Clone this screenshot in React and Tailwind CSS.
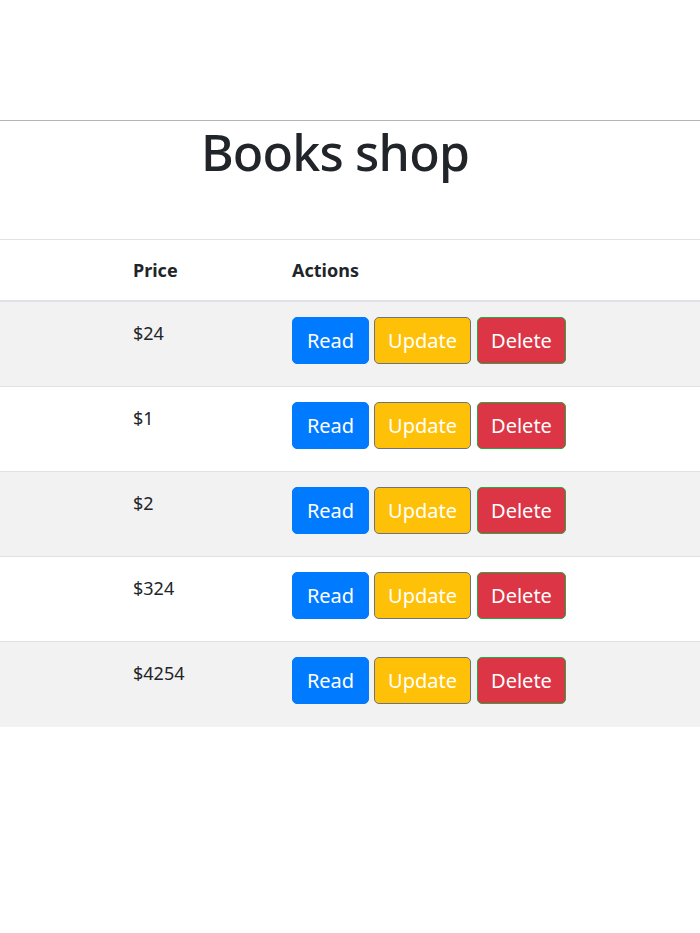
import React from 'react';

const books = [
    { id: 1, price: '$24' },
    { id: 2, price: '$1' },
    { id: 3, price: '$2' },
    { id: 4, price: '$324' },
    { id: 5, price: '$4254' },
];

const App = () => {
    return (
        <div className="min-h-[933px] bg-white text-[#212529]" style={{ fontFamily: '"Noto Sans", "Open Sans", sans-serif' }}>
            <div className="h-[120px]" />
            <div className="h-px bg-[#b4b4b4]" />

            {/* Title */}
            <div className="h-[117px] pr-[30px] text-center">
                <h1 className="mt-[1px] text-[50px] leading-[60px] font-medium tracking-[-0.8px]">Books shop</h1>
            </div>

            {/* Table */}
            <div className="border-t border-[#dee2e6]">
                <div className="flex border-b-2 border-[#dee2e6] text-[18px] font-bold leading-[27px]">
                    <div className="w-[117px] shrink-0" />
                    <div className="w-[159px] shrink-0 px-4 pt-[17px] pb-[16px]">Price</div>
                    <div className="flex-1 px-4 pt-[17px] pb-[16px]">Actions</div>
                </div>

                {books.map((book, idx) => (
                    <div
                        key={book.id}
                        className={`flex h-[85px] text-[18px] leading-[27px] ${idx < books.length - 1 ? 'border-b border-[#dee2e6]' : ''} ${idx % 2 === 0 ? 'bg-[#f2f2f2]' : 'bg-white'}`}
                    >
                        <div className="w-[117px] shrink-0" />
                        <div className="w-[159px] shrink-0 px-4 pt-[18px]">{book.price}</div>
                        <div className="flex-1 pl-4 pt-[15px]">
                            <div className="flex gap-[5px] text-[20px] text-white">
                                <button className="flex h-[47px] w-[77px] items-center justify-center rounded-[5px] border border-[#007bff] bg-[#007bff]">
                                    Read
                                </button>
                                <button className="flex h-[47px] w-[97px] items-center justify-center rounded-[5px] border border-[#6c757d] bg-[#ffc107]">
                                    Update
                                </button>
                                <button className="ml-px flex h-[47px] w-[89px] items-center justify-center rounded-[5px] border border-[#28a745] bg-[#dc3545]">
                                    Delete
                                </button>
                            </div>
                        </div>
                    </div>
                ))}
            </div>
        </div>
    );
};

export default App;
